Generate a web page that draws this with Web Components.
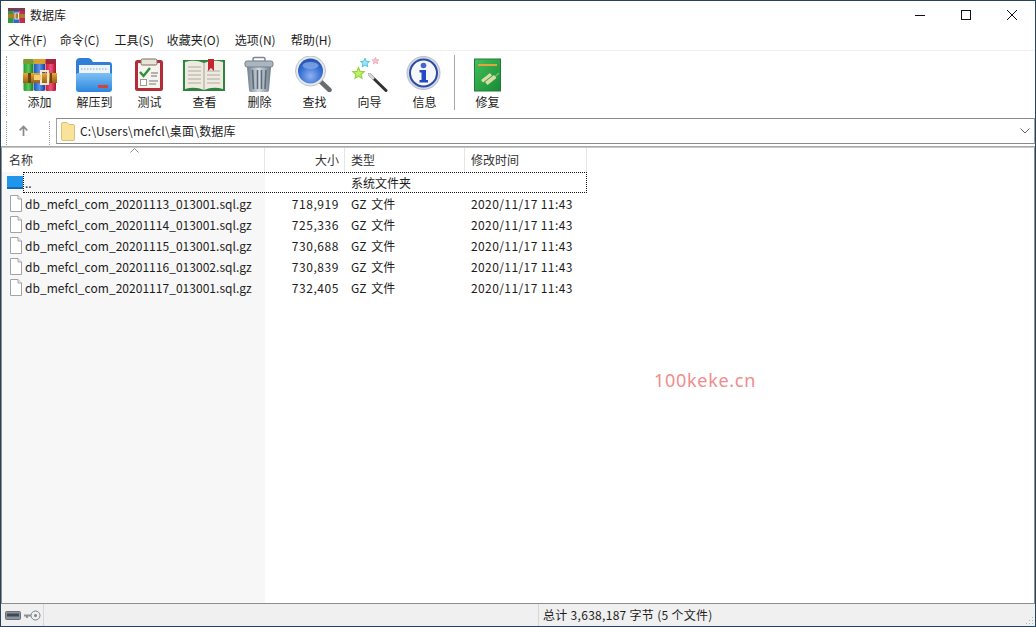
<!DOCTYPE html>
<html lang="zh">
<head>
<meta charset="utf-8">
<title>数据库</title>
<style>
  html, body { margin: 0; height: 100%; overflow: hidden; background: #fff; }
  body { font: 12px/16px "Noto Sans CJK SC", "Noto Sans", sans-serif; color: #1c1c1c; }
  menu-bar span:nth-child(2) { margin-left: -1px; }
  menu-bar span:nth-child(3) { margin-left: 1px; }
  menu-bar span:nth-child(4) { margin-left: -1px; }
  menu-bar span:nth-child(5) { margin-left: 1px; }
  menu-bar span:nth-child(6) { margin-left: 1px; }
</style>
</head>
<body>
<rar-window>
  <title-bar slot="title">数据库</title-bar>
  <menu-bar slot="menu">
    <span>文件(F)</span><span>命令(C)</span><span>工具(S)</span><span>收藏夹(O)</span><span>选项(N)</span><span>帮助(H)</span>
  </menu-bar>
  <tool-bar slot="tools">
    <tool-button icon="add">添加</tool-button>
    <tool-button icon="extract">解压到</tool-button>
    <tool-button icon="test">测试</tool-button>
    <tool-button icon="view">查看</tool-button>
    <tool-button icon="trash">删除</tool-button>
    <tool-button icon="find">查找</tool-button>
    <tool-button icon="wizard">向导</tool-button>
    <tool-button icon="info">信息</tool-button>
    <tool-sep></tool-sep>
    <tool-button icon="repair">修复</tool-button>
  </tool-bar>
  <address-bar slot="address">C:\Users\mefcl\桌面\数据库</address-bar>
  <file-list slot="list">
    <file-row focused kind="up"><span slot="name">..</span><span slot="type">系统文件夹</span></file-row>
    <file-row><span slot="name">db_mefcl_com_20201113_013001.sql.gz</span><span slot="size">718,919</span><span slot="type">GZ 文件</span><span slot="date">2020/11/17 11:43</span></file-row>
    <file-row><span slot="name">db_mefcl_com_20201114_013001.sql.gz</span><span slot="size">725,336</span><span slot="type">GZ 文件</span><span slot="date">2020/11/17 11:43</span></file-row>
    <file-row><span slot="name">db_mefcl_com_20201115_013001.sql.gz</span><span slot="size">730,688</span><span slot="type">GZ 文件</span><span slot="date">2020/11/17 11:43</span></file-row>
    <file-row><span slot="name">db_mefcl_com_20201116_013002.sql.gz</span><span slot="size">730,839</span><span slot="type">GZ 文件</span><span slot="date">2020/11/17 11:43</span></file-row>
    <file-row><span slot="name">db_mefcl_com_20201117_013001.sql.gz</span><span slot="size">732,405</span><span slot="type">GZ 文件</span><span slot="date">2020/11/17 11:43</span></file-row>
  </file-list>
  <status-bar slot="status">总计 3,638,187 字节 (5 个文件)</status-bar>
  <water-mark slot="mark">100keke.cn</water-mark>
</rar-window>

<script>
const star = 'M0 -1 L.27 -.35 L.95 -.31 L.42 .12 L.59 .81 L0 .42 L-.59 .81 L-.42 .12 L-.95 -.31 L-.27 -.35 Z'

const icons = {
  add: `<svg width="47" height="36" viewBox="0 0 47 36">
    <defs>
      <linearGradient id="g" x1="0" x2="1" y1="0" y2="0"><stop offset="0" stop-color="#1f9a3a"/><stop offset=".5" stop-color="#5fc755"/><stop offset="1" stop-color="#127a2c"/></linearGradient>
      <linearGradient id="b" x1="0" x2="1" y1="0" y2="0"><stop offset="0" stop-color="#1f55c0"/><stop offset=".5" stop-color="#5b96ee"/><stop offset="1" stop-color="#17409a"/></linearGradient>
      <linearGradient id="r" x1="0" x2="1" y1="0" y2="0"><stop offset="0" stop-color="#c8173c"/><stop offset=".5" stop-color="#f0557a"/><stop offset="1" stop-color="#a81032"/></linearGradient>
      <linearGradient id="belt" x1="0" x2="0" y1="0" y2="1"><stop offset="0" stop-color="#e8a838"/><stop offset="1" stop-color="#9c5f12"/></linearGradient>
    </defs>
    <rect x="7.500" y="3" width="10" height="32" rx="1.500" fill="url(#g)"/>
    <rect x="18" y="3" width="11" height="32" rx="1.500" fill="url(#b)"/>
    <rect x="29.500" y="3" width="10.500" height="32" rx="1.500" fill="url(#r)"/>
    <rect x="7.500" y="3" width="10" height="5" fill="#7d9a2c"/>
    <rect x="18" y="3" width="11" height="5" fill="#d6a32c"/>
    <rect x="29.500" y="3" width="10.500" height="5" fill="#a3243c"/>
    <rect x="7" y="17" width="34" height="10" fill="url(#belt)"/>
    <rect x="12" y="17" width="3" height="10" fill="#6e4310"/>
    <rect x="34" y="17" width="2" height="10" fill="#6e4310"/>
    <rect x="25" y="15" width="7" height="13" fill="none" stroke="#f2ead0" stroke-width="2"/>
    <rect x="18" y="19" width="7" height="5" fill="#f5d27a"/>
  </svg>`,
  extract: `<svg width="47" height="36" viewBox="0 0 47 36">
    <defs>
      <linearGradient id="f" x1="0" x2="0" y1="0" y2="1"><stop offset="0" stop-color="#7cc0f4"/><stop offset="1" stop-color="#2c86de"/></linearGradient>
    </defs>
    <path d="M5 6 Q5 2 9 2 H17 Q20 2 22 6 H38 Q41 6 41 9 V20 H5 Z" fill="#2f7fd8"/>
    <rect x="8" y="9" width="31" height="12" fill="#eef3f8"/>
    <path d="M10 13 H37" stroke="#8ea6bc" stroke-width="1" stroke-dasharray="1.500 1.500"/>
    <path d="M5 19 Q5 17 7 17 H39 Q41 17 41 19 V33 Q41 36 38 36 H8 Q5 36 5 33 Z" fill="url(#f)"/>
    <rect x="27" y="29" width="10" height="3" fill="#d8413a"/>
  </svg>`,
  test: `<svg width="47" height="36" viewBox="0 0 47 36">
    <rect x="9" y="4" width="28" height="31" rx="2.500" fill="#b42c38"/>
    <rect x="12" y="7" width="22" height="25" fill="#f6f4ee"/>
    <rect x="15" y="3" width="16" height="6" rx="1.500" fill="#e9e4da" stroke="#7c6a62"/>
    <path d="M14 16 L17.500 20 L24 12" fill="none" stroke="#2f8f3a" stroke-width="2.400"/>
    <path d="M25 17 H32 M25 20 H31" stroke="#6f6f6f"/>
    <rect x="14.500" y="23.500" width="6" height="6" fill="#fff" stroke="#999"/>
    <path d="M23 25 H32 M23 28 H30" stroke="#777"/>
  </svg>`,
  view: `<svg width="47" height="36" viewBox="0 0 47 36">
    <path d="M2 4 H44 V35 H2 Z" fill="#2e8540"/>
    <path d="M4 6 Q14 3 23 7 Q32 3 42 6 V33 Q32 30 23 34 Q14 30 4 33 Z" fill="#efeae0"/>
    <path d="M23 7 V34" stroke="#a79f90"/>
    <path d="M7 11 H20 M7 15 H20 M7 19 H20 M7 23 H20 M7 27 H20 M26 15 H39 M26 19 H39 M26 23 H39 M26 27 H39" stroke="#aeaaa2"/>
    <path d="M27 3 H33 V15 L30 12 L27 15 Z" fill="#c3262f"/>
  </svg>`,
  trash: `<svg width="47" height="36" viewBox="0 0 47 36">
    <defs>
      <linearGradient id="t" x1="0" x2="1" y1="0" y2="0"><stop offset="0" stop-color="#72808e"/><stop offset=".5" stop-color="#d3dbe2"/><stop offset="1" stop-color="#6c7a88"/></linearGradient>
    </defs>
    <rect x="17" y="1.500" width="12" height="4" rx="1.500" fill="none" stroke="#7a8692" stroke-width="1.500"/>
    <path d="M11 11 H35 L33 34 Q33 36 31 36 H15 Q13 36 13 34 Z" fill="url(#t)"/>
    <rect x="9" y="5" width="28" height="6" rx="2" fill="#aab5bf" stroke="#74818d"/>
    <path d="M16.500 14 L17.500 33 M21.500 14 V33 M25.500 14 V33 M30 14 L29 33" stroke="#5e6b78" stroke-width="1.600"/>
  </svg>`,
  find: `<svg width="47" height="36" viewBox="0 0 47 36">
    <defs>
      <radialGradient id="l" cx=".5" cy=".7" r=".7"><stop offset="0" stop-color="#8fb2f0"/><stop offset=".6" stop-color="#3a72d4"/><stop offset="1" stop-color="#2150aa"/></radialGradient>
    </defs>
    <path d="M29 25 L38.500 34" stroke="#6a6c70" stroke-width="4.500" stroke-linecap="round"/>
    <circle cx="19.500" cy="15" r="15" fill="#e6e9ed" stroke="#bcc2ca"/>
    <circle cx="19.500" cy="15" r="12.500" fill="url(#l)"/>
    <ellipse cx="19.500" cy="9.500" rx="8" ry="3.500" fill="#86a9e8" opacity=".75"/>
  </svg>`,
  wizard: `<svg width="47" height="36" viewBox="0 0 47 36">
    <path d="M23.500 18.500 L40 34.500" stroke="#303030" stroke-width="3" stroke-linecap="round"/>
    <path d="M23.500 18.500 L27 22" stroke="#d4d6d8" stroke-width="3" stroke-linecap="round"/>
    <path transform="translate(12.500 17.500) scale(6)" d="${star}" fill="#c6f06a" stroke="#8fd43c" stroke-width=".18"/>
    <path transform="translate(19 7) scale(4.800)" d="${star}" fill="#9ae8f4" stroke="#4cc0dc" stroke-width=".2"/>
    <path transform="translate(29.500 5) scale(3.500)" d="${star}" fill="#fbc8d0" stroke="#ee9aa8" stroke-width=".22"/>
  </svg>`,
  info: `<svg width="47" height="36" viewBox="0 0 47 36">
    <circle cx="22.500" cy="17" r="16.500" fill="#d3d7e0" stroke="#b8bdc8"/>
    <circle cx="22.500" cy="17" r="13.500" fill="#f6f7fb" stroke="#2b49a8" stroke-width="2"/>
    <circle cx="22.500" cy="9.500" r="2.800" fill="#4565cc"/>
    <path d="M18.500 14 H25 V24 H27 V26.500 H18.500 V24 H20.500 V16.500 H18.500 Z" fill="#2748c4"/>
  </svg>`,
  repair: `<svg width="47" height="36" viewBox="0 0 47 36">
    <defs>
      <linearGradient id="k" x1="0" x2="1" y1="0" y2="1"><stop offset="0" stop-color="#43c05a"/><stop offset="1" stop-color="#188a36"/></linearGradient>
    </defs>
    <rect x="10.500" y="3" width="26" height="32" fill="url(#k)" stroke="#1f7c38"/>
    <rect x="14" y="8" width="19" height="2" fill="#e0a63c"/>
    <path d="M23 28 L35 17" stroke="#6fc06a" stroke-width="1.500"/>
    <path d="M21 26 L30 19 L32.500 22 L23.500 29 Z M17 24 L26 17 L28 19.500 L19 26.500 Z" fill="#d8dca4"/>
  </svg>`,
  app: `<svg width="17" height="17" viewBox="0 0 17 17">
    <rect x="0" y="1" width="5.500" height="15" fill="#2e9a42"/>
    <rect x="5.500" y="1" width="6" height="15" fill="#3566c8"/>
    <rect x="11.500" y="1" width="5.500" height="15" fill="#c52a4a"/>
    <rect x="0" y="1" width="17" height="3" fill="#7a3a52"/>
    <rect x="0" y="7" width="17" height="4" fill="#b07c28"/>
    <rect x="7" y="6" width="3.500" height="6" fill="none" stroke="#f0e8d0"/>
  </svg>`,
  'up-folder': `<svg width="16" height="13" viewBox="0 0 16 13">
    <rect x="0" y="0" width="16" height="13" fill="#1f96ec"/>
    <rect x="0" y="11" width="16" height="2" fill="#1467b8"/>
  </svg>`,
  file: `<svg width="12" height="17" viewBox="0 0 12 17">
    <path d="M.500 .500 H8 L11.500 4 V16.500 H.500 Z" fill="#fff" stroke="#a3a3a3"/>
    <path d="M8 .500 V4 H11.500" fill="#f0f0f0" stroke="#a3a3a3"/>
  </svg>`,
  'addr-folder': `<svg width="14" height="19" viewBox="0 0 14 19">
    <path d="M.500 2 Q.500 .500 2 .500 H6 L8 2.500 H12 Q13.500 2.500 13.500 4 V17 Q13.500 18.500 12 18.500 H2 Q.500 18.500 .500 17 Z" fill="#fbe29a" stroke="#dcc078"/>
  </svg>`,
  disk: `<svg width="16" height="9" viewBox="0 0 16 9">
    <rect x=".500" y=".500" width="15" height="8" rx="1" fill="#8d959c" stroke="#6a7278"/>
    <rect x="2" y="2.500" width="12" height="3" fill="#3d4a55"/>
  </svg>`,
  key: `<svg width="17" height="11" viewBox="0 0 17 11">
    <circle cx="11.500" cy="5.500" r="4.500" fill="#eef0f0" stroke="#7b8388"/>
    <circle cx="11.500" cy="5.500" r="1.500" fill="#7b8388"/>
    <path d="M0 4.500 H7 V6.500 H4 V8 H2 V6.500 H0 Z" fill="#8a9298"/>
  </svg>`
}

customElements.define('rar-icon', class extends HTMLElement {
  constructor() {
    super()
    this.attachShadow({ mode: 'open' }).innerHTML = `
      <style>:host { display: block; line-height: 0; } svg { display: block; }</style>
      ${icons[this.getAttribute('name')] || ''}`
  }
})

customElements.define('rar-window', class extends HTMLElement {
  constructor() {
    super()
    this.attachShadow({ mode: 'open' }).innerHTML = `
      <style>
        :host {
          display: flex;
          flex-direction: column;
          position: relative;
          box-sizing: border-box;
          width: 1036px;
          height: 627px;
          border: 1px solid #24435f;
          background: #fff;
          overflow: hidden;
        }
        ::slotted([slot="list"]) { flex: 1; min-height: 0; }
      </style>
      <slot name="title"></slot>
      <slot name="menu"></slot>
      <slot name="tools"></slot>
      <slot name="address"></slot>
      <slot name="list"></slot>
      <slot name="status"></slot>
      <slot name="mark"></slot>`
  }
})

customElements.define('title-bar', class extends HTMLElement {
  constructor() {
    super()
    this.attachShadow({ mode: 'open' }).innerHTML = `
      <style>
        :host { display: flex; align-items: center; height: 29px; padding-left: 7px; }
        rar-icon { margin-right: 5px; margin-top: -1px; }
        .text { flex: 1; margin-top: -1px; }
        .btn { width: 46px; height: 29px; display: flex; align-items: center; justify-content: center; }
        .btn svg { display: block; margin-top: -1px; }
      </style>
      <rar-icon name="app"></rar-icon>
      <span class="text"><slot></slot></span>
      <span class="btn"><svg width="10" height="10"><path d="M0 5.500 H10" stroke="#111"/></svg></span>
      <span class="btn"><svg width="10" height="10"><rect x=".5" y=".5" width="9" height="9" fill="none" stroke="#111"/></svg></span>
      <span class="btn"><svg width="10" height="10"><path d="M0 0 L10 10 M10 0 L0 10" stroke="#111"/></svg></span>`
  }
})

customElements.define('menu-bar', class extends HTMLElement {
  constructor() {
    super()
    this.attachShadow({ mode: 'open' }).innerHTML = `
      <style>
        :host { display: flex; height: 20px; align-items: center; padding-left: 7px; gap: 14px; }
      </style>
      <slot></slot>`
  }
})

customElements.define('tool-bar', class extends HTMLElement {
  constructor() {
    super()
    this.attachShadow({ mode: 'open' }).innerHTML = `
      <style>
        :host {
          display: flex;
          box-sizing: border-box;
          height: 68px;
          padding: 5px 0 0 5px;
          border-top: 1px solid #f0f0f0;
        }
        .grip { width: 1px; height: 60px; margin-right: 4px; border-left: 1px dotted #a0a0a0; }
      </style>
      <span class="grip"></span>
      <slot></slot>`
  }
})

customElements.define('tool-button', class extends HTMLElement {
  constructor() {
    super()
    this.attachShadow({ mode: 'open' }).innerHTML = `
      <style>
        :host {
          display: flex;
          flex-direction: column;
          align-items: center;
          width: 55px;
          flex: none;
        }
        .label { margin-top: 2px; line-height: 16px; }
      </style>
      <rar-icon name="${this.getAttribute('icon')}"></rar-icon>
      <span class="label"><slot></slot></span>`
  }
})

customElements.define('tool-sep', class extends HTMLElement {
  constructor() {
    super()
    this.attachShadow({ mode: 'open' }).innerHTML = `
      <style>
        :host { display: block; width: 1px; height: 55px; margin: -1px 5px 0 2px; background: #a8a8a8; flex: none; }
      </style>`
  }
})

customElements.define('address-bar', class extends HTMLElement {
  constructor() {
    super()
    this.attachShadow({ mode: 'open' }).innerHTML = `
      <style>
        :host {
          display: flex;
          align-items: flex-start;
          box-sizing: border-box;
          height: 29px;
          padding-left: 5px;
          border-bottom: 1px solid #a8a8a8;
        }
        .grip { width: 1px; height: 24px; margin-top: 3px; border-left: 1px dotted #a0a0a0; }
        .up { width: 30px; height: 24px; margin-left: 11px; display: flex; align-items: center; }
        .box {
          flex: 1;
          display: flex;
          align-items: center;
          box-sizing: border-box;
          height: 26px;
          margin: 0 0 0 5px;
          padding-left: 4px;
          border: 1px solid #a0a0a0;
          border-top-color: #8a8a8a;
          border-bottom-color: #8a8a8a;
        }
        .path { flex: 1; margin-left: 5px; letter-spacing: .2px; }
        .chev { width: 14px; display: flex; }
      </style>
      <span class="grip"></span>
      <span class="up">
        <svg width="9" height="11" viewBox="0 0 9 11"><path d="M4.500 11 V1.500 M.7 5.300 L4.500 1.500 L8.300 5.300" fill="none" stroke="#8a8a8a" stroke-width="1.700"/></svg>
      </span>
      <span class="grip"></span>
      <div class="box">
        <rar-icon name="addr-folder"></rar-icon>
        <span class="path"><slot></slot></span>
        <span class="chev"><svg width="10" height="6" viewBox="0 0 10 6"><path d="M.5 .5 L5 5 L9.500 .5" fill="none" stroke="#666"/></svg></span>
      </div>`
  }
})

customElements.define('file-list', class extends HTMLElement {
  constructor() {
    super()
    this.attachShadow({ mode: 'open' }).innerHTML = `
      <style>
        :host {
          display: flex;
          flex-direction: column;
          box-sizing: border-box;
          border-top: 1px solid #c8c8c8;
          border-right: 1px solid #8e8e8e;
          border-left: 1px solid #8e8e8e;
        }
        .head {
          display: grid;
          grid-template-columns: 263px 80px 120px 122px;
          height: 24px;
          align-items: center;
          flex: none;
        }
        .head span {
          display: block;
          box-sizing: border-box;
          height: 24px;
          line-height: 23px;
          padding: 0 6px;
          border-right: 1px solid #e5e5e5;
          color: #333;
        }
        .head .name { position: relative; padding-left: 7px; }
        .head .sort { position: absolute; left: 128px; top: 0; padding: 0; border: 0; height: 5px; line-height: 0; }
        .head .size { text-align: right; padding-right: 5px; }
        .body {
          flex: 1;
          background: linear-gradient(to right, #f7f7f7 263px, #fff 263px);
        }
      </style>
      <div class="head">
        <span class="name">名称<span class="sort"><svg width="9" height="5" viewBox="0 0 9 5"><path d="M.5 4.500 L4.500 .5 L8.500 4.500" fill="none" stroke="#8a8a8a"/></svg></span></span>
        <span class="size">大小</span>
        <span>类型</span>
        <span>修改时间</span>
      </div>
      <div class="body"><slot></slot></div>`
  }
})

customElements.define('file-row', class extends HTMLElement {
  constructor() {
    super()
    const up = this.getAttribute('kind') === 'up'
    this.attachShadow({ mode: 'open' }).innerHTML = `
      <style>
        :host { display: flex; height: 21px; align-items: stretch; }
        .icon {
          width: 21px;
          flex: none;
          display: flex;
          align-items: center;
          padding-left: ${up ? 5 : 8}px;
          box-sizing: border-box;
        }
        .cells {
          display: grid;
          grid-template-columns: 241px 80px 120px 123px;
          width: 564px;
          box-sizing: border-box;
          align-items: center;
          border: 1px solid transparent;
        }
        :host([focused]) .cells { border: 1px dotted #111; }
        .name { padding-left: 1px; white-space: nowrap; letter-spacing: .03px; }
        .size { padding-right: 6px; text-align: right; letter-spacing: .55px; }
        .type, .date { padding-left: 6px; white-space: nowrap; }
        .type { word-spacing: 2px; }
        .date { letter-spacing: .4px; }
      </style>
      <span class="icon"><rar-icon name="${up ? 'up-folder' : 'file'}"></rar-icon></span>
      <div class="cells">
        <span class="name"><slot name="name"></slot></span>
        <span class="size"><slot name="size"></slot></span>
        <span class="type"><slot name="type"></slot></span>
        <span class="date"><slot name="date"></slot></span>
      </div>`
  }
})

customElements.define('status-bar', class extends HTMLElement {
  constructor() {
    super()
    this.attachShadow({ mode: 'open' }).innerHTML = `
      <style>
        :host {
          display: flex;
          align-items: center;
          box-sizing: border-box;
          height: 23px;
          background: #f0f0f0;
          border-top: 1px solid #8e8e8e;
          padding-left: 4px;
        }
        .icons { display: flex; align-items: center; gap: 3px; width: 38px; height: 100%; border-right: 1px solid #d8d8d8; }
        .total {
          margin-left: 494px;
          padding-left: 4px;
          height: 100%;
          display: flex;
          align-items: center;
          flex: 1;
          border-left: 1px solid #d8d8d8;
          letter-spacing: .3px;
        }
        .grip { width: 10px; height: 10px; align-self: flex-end; margin-right: 1px; margin-bottom: 1px; }
      </style>
      <span class="icons"><rar-icon name="disk"></rar-icon><rar-icon name="key"></rar-icon></span>
      <span class="total"><span><slot></slot></span></span>
      <svg class="grip" viewBox="0 0 10 10"><path d="M8 2 h1 v1 h-1 z M5 5 h1 v1 h-1 z M8 5 h1 v1 h-1 z M2 8 h1 v1 h-1 z M5 8 h1 v1 h-1 z M8 8 h1 v1 h-1 z" fill="#b8b8b8"/></svg>`
  }
})

customElements.define('water-mark', class extends HTMLElement {
  constructor() {
    super()
    this.attachShadow({ mode: 'open' }).innerHTML = `
      <style>
        :host {
          position: absolute;
          left: 653px;
          top: 367px;
          font: 18px/24px "Noto Sans", sans-serif;
          color: #f08c8c;
          letter-spacing: .7px;
        }
      </style>
      <slot></slot>`
  }
})
</script>
</body>
</html>
